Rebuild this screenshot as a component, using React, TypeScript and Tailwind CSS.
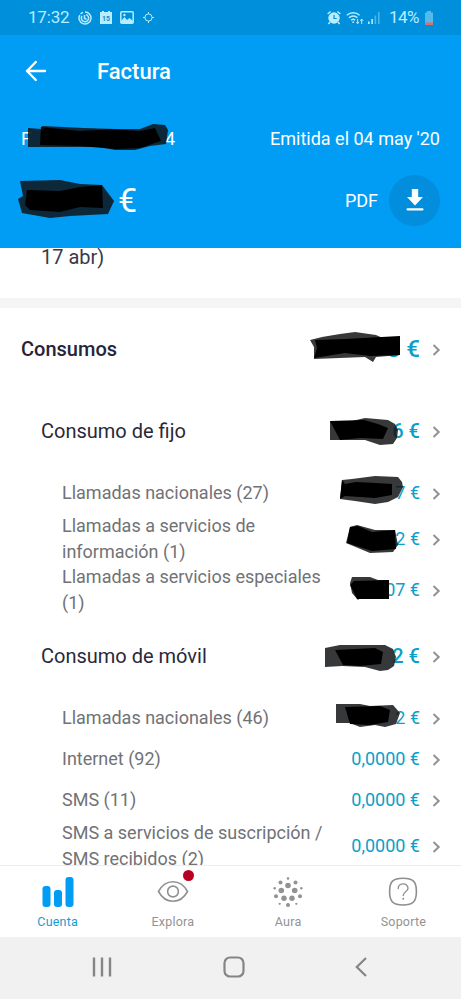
type Scribble = { outer: string; inner: string };

type Row = {
  lines: string[];
  value: string;
  kind: 'title' | 'section' | 'item';
  top: number;
  height: number;
  mask?: Scribble;
};

const rows: Row[] = [
  {
    lines: ['Consumos'], value: '8 €', kind: 'title', top: 308, height: 82,
    mask: {
      outer: '310,340 322,337 340,334 355,332 376,335 385,339 400,337 400,355 376,357 373,362 365,357 314,359 314,347',
      inner: '315,340 345,339 400,336 400,355 370,356 345,353 314,358 317,348',
    },
  },
  {
    lines: ['Consumo de fijo'], value: '6 €', kind: 'section', top: 390, height: 82,
    mask: {
      outer: '330,421 352,421 365,418 388,420 395,424 398,430 397,438 393,444 380,445 365,440 330,440',
      inner: '330,421 364,420 378,424 388,428 383,439 360,438 340,440',
    },
  },
  {
    lines: ['Llamadas nacionales (27)'], value: '7 €', kind: 'item', top: 472, height: 41,
    mask: {
      outer: '342,480 352,479 375,476 398,477 402,482 403,487 398,497 388,502 375,504 355,501 340,499',
      inner: '342,480 345,484 356,482 376,483 392,484 392,495 375,498 345,496 340,499',
    },
  },
  {
    lines: ['Llamadas a servicios de', 'información (1)'], value: '2 €', kind: 'item', top: 513, height: 51,
    mask: {
      outer: '350,527 357,525 375,530 395,530 398,545 393,552 370,553 346,543',
      inner: '350,527 358,526 372,532 395,530 396,549 372,551 347,543',
    },
  },
  {
    lines: ['Llamadas a servicios especiales', '(1)'], value: '07 €', kind: 'item', top: 564, height: 51,
    mask: {
      outer: '352,577 370,577 378,580 389,580 389,599 359,599 358,600 352,593 350,583',
      inner: '354,581 389,580 389,599 357,599 350,585',
    },
  },
  {
    lines: ['Consumo de móvil'], value: '2 €', kind: 'section', top: 615, height: 82,
    mask: {
      outer: '325,648 340,645 385,645 393,649 396,657 394,666 388,670 380,671 365,667 342,666 325,667',
      inner: '335,650 375,648 383,652 381,664 360,666 343,665',
    },
  },
  {
    lines: ['Llamadas nacionales (46)'], value: '2 €', kind: 'item', top: 697, height: 41,
    mask: {
      outer: '336,704 360,704 370,706 393,705 400,713 396,724 385,727 375,725 360,727 350,723 336,723',
      inner: '345,707 380,706 390,710 388,722 370,725 350,724',
    },
  },
  { lines: ['Internet (92)'], value: '0,0000 €', kind: 'item', top: 738, height: 41 },
  { lines: ['SMS (11)'], value: '0,0000 €', kind: 'item', top: 779, height: 41 },
  { lines: ['SMS a servicios de suscripción /', 'SMS recibidos (2)'], value: '0,0000 €', kind: 'item', top: 820, height: 51 },
];

const labelStyles = {
  title: 'pl-[21px] text-[20px] font-medium text-[#25253a]',
  section: 'pl-[41px] text-[20px] text-[#29293a]',
  item: 'pl-[62px] text-[18px] leading-[25.5px] text-[#717276]',
};

const valueStyles = {
  title: 'text-[24px] font-medium',
  section: 'text-[20px] font-medium',
  item: 'text-[18px]',
};

function Marker({ mask, viewBox, className }: { mask: Scribble; viewBox: string; className: string }) {
  return (
    <svg className={className} viewBox={viewBox} aria-hidden="true">
      <polygon points={mask.outer} fill="#101214" fillOpacity="0.84" />
      <polygon points={mask.inner} fill="#000" />
    </svg>
  );
}

function BillRow({ row }: { row: Row }) {
  return (
    <div className="relative flex shrink-0 items-center pr-[20px]" style={{ height: row.height }}>
      <div className={`flex-1 whitespace-nowrap ${labelStyles[row.kind]}`}>
        {row.lines.map((line) => <div key={line}>{line}</div>)}
      </div>
      <span className={`whitespace-nowrap text-[#0a9fca] ${valueStyles[row.kind]}`}>{row.value}</span>
      <svg className="mt-[2px] ml-[12px] h-[12px] w-[9px]" viewBox="0 0 9 12" fill="none" stroke="#929292" strokeWidth="2">
        <path d="M1.5 1 6.7 6 1.5 11" />
      </svg>
      {row.mask && (
        <Marker
          mask={row.mask}
          viewBox={`0 ${row.top} 461 ${row.height}`}
          className="absolute inset-0 h-full w-full overflow-visible"
        />
      )}
    </div>
  );
}

function StatusBar() {
  return (
    <div className="flex h-[35px] shrink-0 items-center bg-[#008fdb] pl-[28px] text-[#b7edff]">
      <span className="w-[50px] text-[17px] tracking-[-0.2px]">17:32</span>
      <svg className="h-[14px] w-[14px]" viewBox="0 0 14 14" fill="none" stroke="currentColor" strokeWidth="1.5">
        <path d="M7 1a6 6 0 1 1-5.2 3M2.5 2.8 5 1.3M4 5a3.6 3.6 0 1 0 4-1.4M6.5 4v3.5l2 .8" />
      </svg>
      <svg className="ml-[7px] h-[14px] w-[14px]" viewBox="0 0 14 14">
        <path fill="currentColor" d="M1 1h2V0h2v1h4V0h2v1h2v12H1z" />
        <text x="7" y="10" textAnchor="middle" fontSize="7" fontWeight="700" fill="#168bc5">15</text>
      </svg>
      <svg className="ml-[7px] h-[13px] w-[14px]" viewBox="0 0 14 13" fill="none">
        <rect x="0.8" y="0.8" width="12.4" height="11.4" rx="1" stroke="currentColor" strokeWidth="1.5" />
        <path d="m1 10 3.5-4L7 9l2.5-2L13 10v2H1z" fill="currentColor" />
        <circle cx="4.4" cy="4" r="1.2" fill="currentColor" />
      </svg>
      <svg className="ml-[9px] h-[11px] w-[11px]" viewBox="0 0 11 11" fill="none" stroke="currentColor" strokeWidth="1">
        <circle cx="5.5" cy="5.5" r="3.6" />
        <path d="M5.5 0v2M5.5 9v2M0 5.5h2M9 5.5h2" />
      </svg>
      <svg className="ml-auto h-[15px] w-[14px]" viewBox="0 0 14 15" fill="none" stroke="currentColor">
        <circle cx="7" cy="8" r="5.2" fill="currentColor" />
        <path d="M.7 4 3.6 1.5M13.3 4l-2.9-2.5M3 12l-1.5 2M11 12l1.5 2" strokeWidth="1.6" />
        <path d="M7 5v3.5h2.7" stroke="#008fdb" strokeWidth="1.2" />
      </svg>
      <svg className="ml-[5px] h-[14px] w-[18px]" viewBox="0 0 18 14" fill="none" stroke="currentColor" strokeWidth="1.4">
        <path d="M.8 4.3a9.2 9.2 0 0 1 12.8 0M3 6.8a6 6 0 0 1 8.5 0M5.2 9.2a3 3 0 0 1 4 0" />
        <circle cx="7.2" cy="11.2" r=".9" fill="currentColor" stroke="none" />
        <path d="M11.7 8v4.5M10.3 11l1.4 1.7L13 11M15.7 13V8M14.3 9.8 15.7 8l1.3 1.8" strokeWidth="1" />
      </svg>
      <svg className="ml-[4px] h-[13px] w-[12px]" viewBox="0 0 12 13" fill="currentColor">
        <path d="M0 10.5h1.6V13H0zM3.3 8h1.6v5H3.3z" />
        <path opacity=".4" d="M6.6 4.5h1.6V13H6.6zM10 1h1.6v12H10z" />
      </svg>
      <span className="ml-[9px] w-[36px] text-[17px] tracking-[-0.6px]">14%</span>
      <svg className="mr-[28px] h-[14px] w-[8px]" viewBox="0 0 8 14">
        <path d="M2 0h4v1.5h2V14H0V1.5h2z" fill="#55b9e9" />
        <path d="M0 11.5h8V14H0z" fill="#df6d6c" />
      </svg>
    </div>
  );
}

const headerMarks: Scribble[] = [
  {
    outer: '28,128 41,129 42,126 84,128 115,129 140,129 153,124 165,125 168,130 166,144 150,146 135,150 115,150 100,147 60,147 28,147',
    inner: '41,127 80,131 110,129 140,131 155,128 161,141 140,148 115,149 80,146 40,145',
  },
  {
    outer: '20,181 60,180 80,184 102,185 108,193 114,201 108,214 70,216 50,218 22,213 18,199 23,196',
    inner: '27,190 60,191 80,187 102,185 103,208 80,207 60,212 30,210 25,205',
  },
];

function Header() {
  return (
    <header className="relative flex h-[213px] shrink-0 flex-col bg-[#019df4] text-white">
      <div className="flex h-[72px] items-center pl-[25px]">
        <svg className="h-[22px] w-[22px]" viewBox="0 0 22 22" fill="none" stroke="currentColor" strokeWidth="2.4" strokeLinecap="round" strokeLinejoin="round">
          <path d="M20 11H2M10.8 2 2 11l8.8 9" />
        </svg>
        <h1 className="ml-[50px] text-[22px] font-medium">Factura</h1>
      </div>
      <div className="flex h-[62px] items-center justify-between pr-[21px] pl-[21px] text-[18px]">
        <div className="flex w-[154px] justify-between"><span>F</span><span>4</span></div>
        <span>Emitida el 04 may '20</span>
      </div>
      <div className="flex h-[62px] items-center pr-[21px] pl-[118px]">
        <span className="text-[34px]">€</span>
        <span className="ml-auto text-[18px]">PDF</span>
        <div className="ml-[11px] flex size-[51px] items-center justify-center rounded-full bg-[#028ddd]">
          <svg className="h-[22px] w-[18px]" viewBox="0 0 18 22" fill="currentColor">
            <path d="M5.8 0h6.4v8H17l-8 8.5L1 8h4.8z" />
            <rect x="0.5" y="19.3" width="17" height="2.2" rx="1" />
          </svg>
        </div>
      </div>
      {headerMarks.map((mask) => (
        <Marker key={mask.outer} mask={mask} viewBox="0 35 461 213" className="absolute inset-0 h-full w-full" />
      ))}
    </header>
  );
}

const auraDots = [
  [15, 1.5, 1.3], [7.5, 5.5, 2], [22.5, 5.5, 2], [15, 8.5, 2.8],
  [1.7, 11.2, 1.2], [28.3, 11.2, 1.2], [8.3, 13.5, 2.8], [21.7, 13.5, 2.8],
  [3, 19.3, 2], [27, 19.3, 2], [11, 21.2, 2.7], [19, 21.2, 2.7],
  [6.7, 26.8, 1.1], [23.3, 26.8, 1.1], [15, 28, 2],
];

function TabBar() {
  const tab = 'flex flex-1 flex-col items-center pt-[11px] text-[12.5px] leading-[16px] tracking-[0.2px] text-[#939393]';
  return (
    <nav className="flex h-[72px] shrink-0 border-t border-[#ededed] bg-white">
      <div className={`${tab} !text-[#159bd0]`}>
        <svg className="mb-[7px] h-[30px] w-[32px]" viewBox="0 0 32 30" fill="#019df4">
          <rect x="0.5" y="9" width="8" height="21" rx="3" />
          <rect x="12" y="13" width="8" height="17" rx="3" />
          <rect x="23.5" y="0" width="8" height="30" rx="3" />
        </svg>
        Cuenta
      </div>
      <div className={`${tab} relative`}>
        <svg className="mb-[7px] h-[30px] w-[32px]" viewBox="0 0 32 30" fill="none" stroke="#919191" strokeWidth="1.6">
          <path d="M1.5 14.5C8.5 1.5 23.5 1.5 30.5 14.5C23.5 27.5 8.5 27.5 1.5 14.5Z" />
          <circle cx="16" cy="14.5" r="5.4" />
        </svg>
        <span className="absolute top-[4px] left-[68px] size-[11px] rounded-full bg-[#b80022]" />
        Explora
      </div>
      <div className={tab}>
        <svg className="mb-[7px] h-[30px] w-[30px]" viewBox="0 0 30 30" fill="#929292">
          {auraDots.map(([x, y, r]) => <circle key={`${x}-${y}`} cx={x} cy={y} r={r} />)}
        </svg>
        Aura
      </div>
      <div className={tab}>
        <svg className="mb-[7px] h-[30px] w-[30px]" viewBox="0 0 30 30" fill="none" stroke="#8e8e8e" strokeWidth="1.6" strokeLinecap="round">
          <path d="M15 1.3C25 1.3 28.4 4.5 28.4 14.5S25 28 15 28S1.6 24.5 1.6 14.5S5 1.3 15 1.3Z" />
          <path d="M10.2 11.5C10.2 5.5 20 5.4 20 11.2C20 15 15.2 14.5 15.2 18.5" strokeWidth="1.4" />
          <circle cx="15.2" cy="21.8" r="1" fill="#8e8e8e" stroke="none" />
        </svg>
        Soporte
      </div>
    </nav>
  );
}

function SystemNav() {
  return (
    <div className="flex h-[62px] shrink-0 items-center justify-between bg-[#f1f1f1] pr-[94px] pl-[92px] pb-[2px]">
      <svg className="h-[20px] w-[20px]" viewBox="0 0 20 20" fill="none" stroke="#858585" strokeWidth="2.4">
        <path d="M2 0.5v19M10 .5v19M18 .5v19" />
      </svg>
      <svg className="h-[22px] w-[22px]" viewBox="0 0 22 22" fill="none" stroke="#858585" strokeWidth="2.2">
        <rect x="1.5" y="1.5" width="19" height="19" rx="5.5" />
      </svg>
      <svg className="h-[20px] w-[12px]" viewBox="0 0 12 20" fill="none" stroke="#858585" strokeWidth="2.2">
        <path d="M11 1 1.8 10 11 19" />
      </svg>
    </div>
  );
}

export default function App() {
  return (
    <div className="flex h-[999px] w-[461px] flex-col overflow-hidden bg-white font-[Roboto,sans-serif]">
      <StatusBar />
      <Header />
      <main className="flex min-h-0 flex-1 flex-col overflow-hidden">
        <div className="h-[50px] shrink-0 pt-[-4px] pl-[41px] text-[20px] leading-[18px] text-[#39394a]">17 abr)</div>
        <div className="h-[10px] shrink-0 bg-[#f5f5f5]" />
        {rows.map((row) => <BillRow key={row.lines[0]} row={row} />)}
      </main>
      <TabBar />
      <SystemNav />
    </div>
  );
}
